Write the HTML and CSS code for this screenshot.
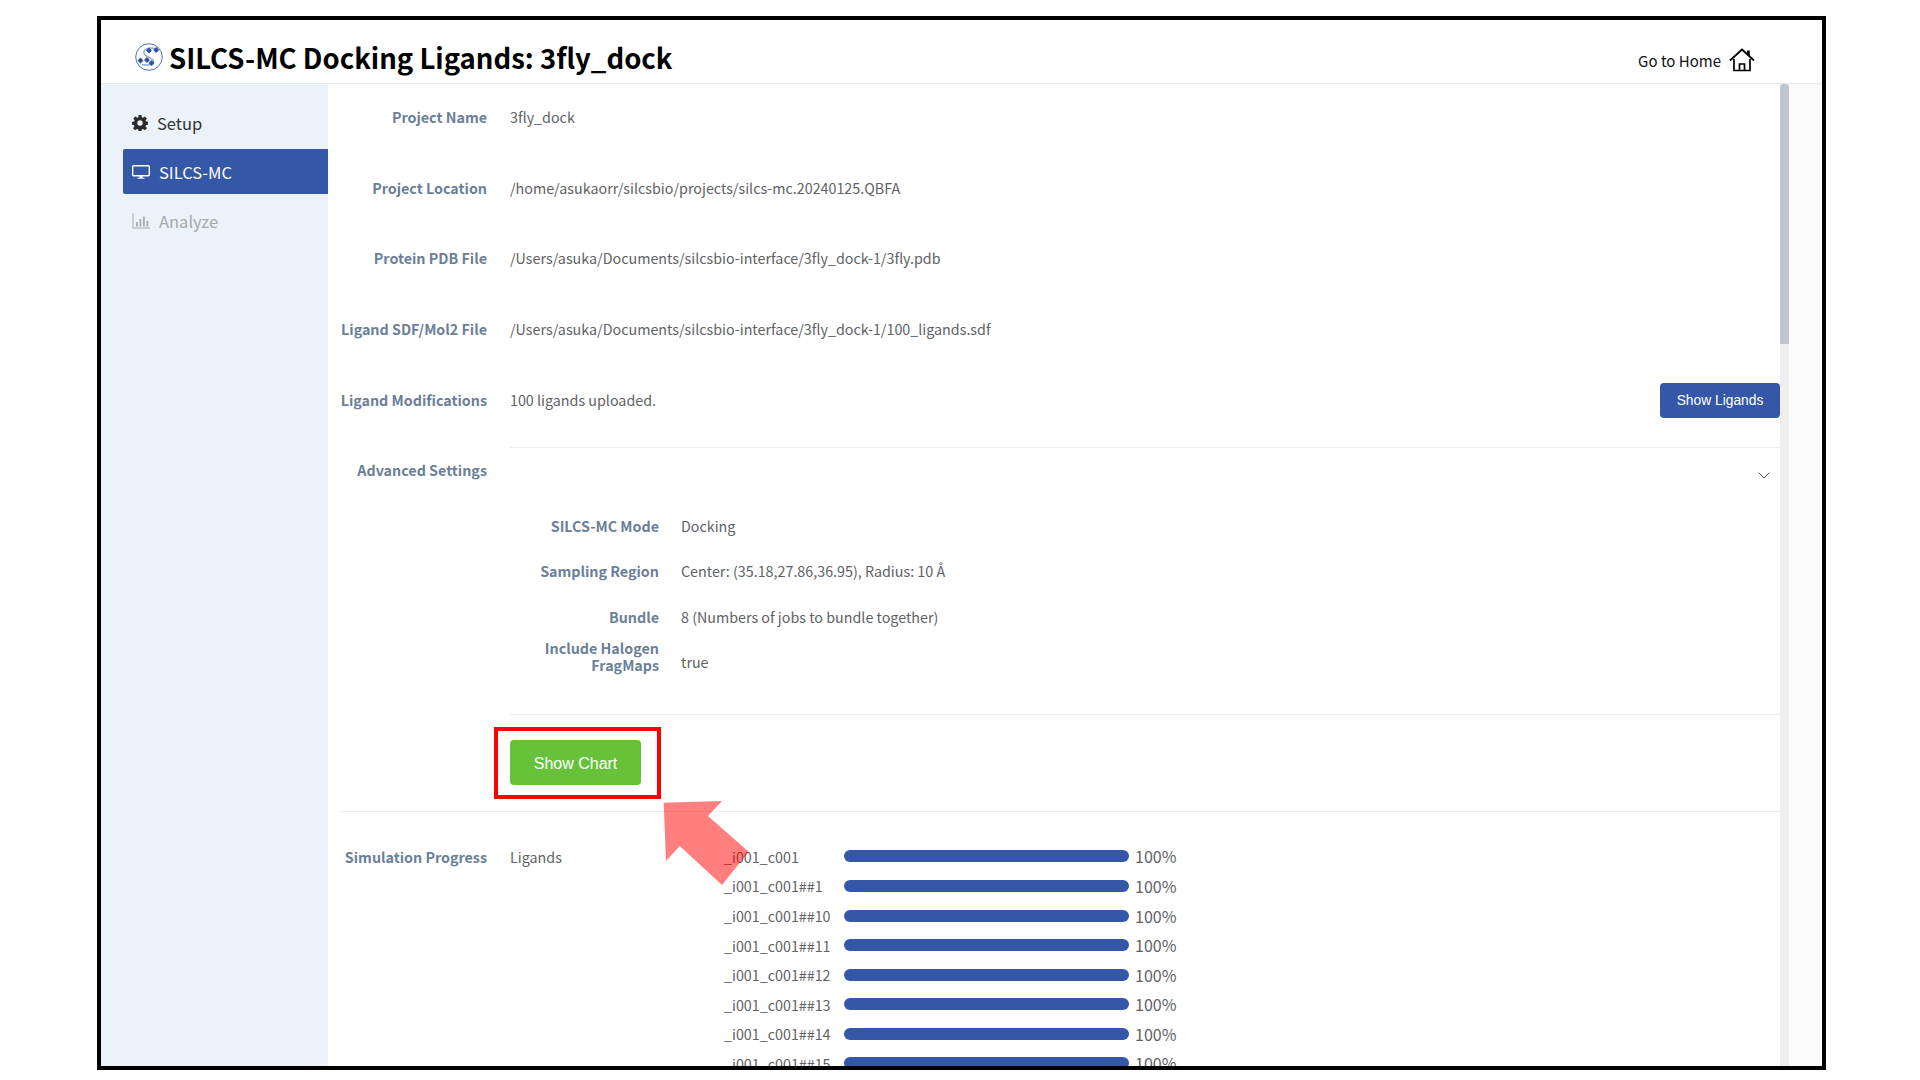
FILE: index.html
```html
<!DOCTYPE html>
<html lang="en">
<head>
<meta charset="utf-8">
<title>SILCS-MC Docking Ligands</title>
<link rel="stylesheet" href="styles.css">
</head>
<body>
<div class="frame">
  <header class="topbar">
    <svg class="logo" viewBox="0 0 28 28" aria-hidden="true">
      <circle cx="14" cy="14" r="13.300" fill="none" stroke="#4f72b8" stroke-width="1"/>
      <path d="M21 6C14 3.500 8 6 9 10.500c.8 3.300 9 4 9.500 7.500.4 3.300-5 5-11.500 3.500" fill="none" stroke="#8ea6d6" stroke-width="1.400"/>
      <path d="M14 4.500l3 3-3 3-3-3zM21.200 4l3 3-3 3-3-3zM5.500 14.500l3 3-3 3-3-3zM12 14l3 3-3 3-3-3zM16.500 17l3 3-3 3-3-3z" fill="#2f5299"/>
    </svg>
    <h1 class="title">SILCS-MC Docking Ligands: 3fly_dock</h1>
    <a class="home">Go to Home
      <svg class="home-icon" viewBox="0 0 26 24" aria-hidden="true">
        <path d="M1 12.500L13 1.500l12 11" fill="none" stroke="#000" stroke-width="1.700"/>
        <path d="M18 2.500h2.800v6.500L18 6.500z" fill="#000"/>
        <path d="M5 11v11.500h16V11" fill="none" stroke="#000" stroke-width="1.700"/>
        <path d="M10.500 23v-7h5v7" fill="none" stroke="#000" stroke-width="1.700"/>
      </svg>
    </a>
  </header>
  <div class="layout">
    <nav class="sidebar">
      <div class="nav-item">
        <svg class="nav-icon" viewBox="0 0 16 16" aria-hidden="true">
          <path fill="#2b2b2b" fill-rule="evenodd" d="M6.600 0h2.800l.4 2.200 1.200.5L12.900 1.400l2 2-1.300 1.900.5 1.200 2.200.4v2.800l-2.200.4-.5 1.200 1.300 1.900-2 2-1.900-1.300-1.200.5-.4 2.200H6.600l-.4-2.200-1.200-.5-1.900 1.300-2-2 1.300-1.900-.5-1.200L-.1 9.700V6.900l2.200-.4.5-1.200L1.300 3.400l2-2 1.900 1.300 1.200-.5zM8 5.300a2.700 2.700 0 1 0 0 5.400 2.700 2.700 0 0 0 0-5.400z"/>
        </svg>
        <span>Setup</span>
      </div>
      <div class="nav-item active">
        <svg class="nav-icon wide" viewBox="0 0 18 16" aria-hidden="true">
          <rect x=".7" y="1.700" width="16.600" height="10" rx="1" fill="none" stroke="#fff" stroke-width="1.400"/>
          <path fill="#fff" d="M7.500 12h3v1.800h2v1H5.500v-1h2z"/>
        </svg>
        <span>SILCS-MC</span>
      </div>
      <div class="nav-item muted">
        <svg class="nav-icon wide" viewBox="0 0 18 16" aria-hidden="true">
          <path fill="#aaa" d="M.5 0h1v14.500H18v1H.500zM4 9h1.800v4.500H4zM7.500 6h1.800v7.500H7.500zM11 3.500h1.800v10H11zM14.500 8h1.800v5.500h-1.800z"/>
        </svg>
        <span>Analyze</span>
      </div>
    </nav>
    <main class="main">
      <div class="content">
        <div class="row"><div class="label">Project Name</div><div class="value">3fly_dock</div></div>
        <div class="row"><div class="label">Project Location</div><div class="value">/home/asukaorr/silcsbio/projects/silcs-mc.20240125.QBFA</div></div>
        <div class="row"><div class="label">Protein PDB File</div><div class="value">/Users/asuka/Documents/silcsbio-interface/3fly_dock-1/3fly.pdb</div></div>
        <div class="row"><div class="label">Ligand SDF/Mol2 File</div><div class="value">/Users/asuka/Documents/silcsbio-interface/3fly_dock-1/100_ligands.sdf</div></div>
        <div class="row row-short">
          <div class="label">Ligand Modifications</div>
          <div class="value value-split">100 ligands uploaded.<button class="btn-blue">Show Ligands</button></div>
        </div>
        <div class="row row-adv">
          <div class="label label-adv">Advanced Settings</div>
          <div class="adv">
            <div class="chevron-line">
              <svg class="chevron" viewBox="0 0 12 7" aria-hidden="true"><path d="M.7.700L6 6l5.300-5.300" fill="none" stroke="#444" stroke-width="1"/></svg>
            </div>
            <div class="sub-row"><div class="sub-label">SILCS-MC Mode</div><div class="value">Docking</div></div>
            <div class="sub-row"><div class="sub-label">Sampling Region</div><div class="value">Center: (35.18,27.86,36.95), Radius: 10 Å</div></div>
            <div class="sub-row"><div class="sub-label">Bundle</div><div class="value">8 (Numbers of jobs to bundle together)</div></div>
            <div class="sub-row"><div class="sub-label tight">Include Halogen FragMaps</div><div class="value">true</div></div>
          </div>
        </div>
        <div class="chart-row">
          <div class="chart-btn-wrap">
            <button class="btn-green">Show Chart</button>
            <div class="highlight"></div>
          </div>
        </div>
        <div class="progress-row">
          <div class="label">Simulation Progress</div>
          <div class="value ligands">Ligands</div>
          <div class="bars">
            <div class="bar-row"><span class="bar-name">_i001_c001</span><span class="bar"></span><span class="pct">100%</span></div>
            <div class="bar-row"><span class="bar-name">_i001_c001##1</span><span class="bar"></span><span class="pct">100%</span></div>
            <div class="bar-row"><span class="bar-name">_i001_c001##10</span><span class="bar"></span><span class="pct">100%</span></div>
            <div class="bar-row"><span class="bar-name">_i001_c001##11</span><span class="bar"></span><span class="pct">100%</span></div>
            <div class="bar-row"><span class="bar-name">_i001_c001##12</span><span class="bar"></span><span class="pct">100%</span></div>
            <div class="bar-row"><span class="bar-name">_i001_c001##13</span><span class="bar"></span><span class="pct">100%</span></div>
            <div class="bar-row"><span class="bar-name">_i001_c001##14</span><span class="bar"></span><span class="pct">100%</span></div>
            <div class="bar-row"><span class="bar-name">_i001_c001##15</span><span class="bar"></span><span class="pct">100%</span></div>
          </div>
        </div>
      </div>
      <div class="track"><div class="thumb"></div></div>
      <div class="gutter"></div>
    </main>
  </div>
  <svg class="arrow" viewBox="0 0 92 88" aria-hidden="true">
    <polygon points="3.700,4.700 62,3 48,18 88.600,53.700 62,87 19.700,48 6,63" fill="rgba(255,0,0,.5)"/>
  </svg>
</div>
</body>
</html>
```
FILE: styles.css
```css
* { box-sizing: border-box; }
html, body { margin: 0; padding: 0; background: #fff; overflow: hidden; }
body {
  font-family: "Noto Sans CJK JP", "Noto Sans", sans-serif;
  width: 1920px;
  height: 1080px;
}
.frame {
  position: relative;
  margin: 16px 0 0 97px;
  width: 1729px;
  height: 1054px;
  border: 4px solid #000;
  overflow: hidden;
  display: flex;
  flex-direction: column;
  background: #fff;
}
.topbar {
  flex: 0 0 64px;
  display: flex;
  align-items: center;
  padding: 10px 67px 0 34px;
  border-bottom: 1px solid #e4e7ed;
}
.logo { width: 28px; height: 28px; margin-right: 6px; flex: none; }
.title {
  margin: 0;
  font-size: 27.5px;
  line-height: 40px;
  font-weight: 700;
  color: #000;
  flex: 1;
}
.home {
  display: flex;
  align-items: center;
  gap: 8px;
  font-size: 15px;
  color: #111;
  margin-top: 8px;
}
.home-icon { width: 26px; height: 24px; margin-top: -2px; }
.layout { flex: 1; display: flex; min-height: 0; }
.sidebar {
  flex: 0 0 227px;
  background: #ebf2f9;
  padding: 16px 0 0 22px;
  display: flex;
  flex-direction: column;
  gap: 4px;
}
.nav-item {
  height: 45px;
  display: flex;
  align-items: center;
  padding-left: 9px;
  font-size: 16.5px;
  color: #333;
  border-radius: 2px 0 0 2px;
}
.nav-item.active { background: #3557a7; color: #fff; }
.nav-item.muted { color: #a8a8a8; }
.nav-icon { width: 16px; height: 16px; margin-right: 9px; flex: none; }
.nav-icon.wide { width: 18px; margin-right: 9px; }
.main { flex: 1; display: flex; min-width: 0; }
.content {
  flex: 0 0 1452px;
  padding: 0 0 0 11px;
  overflow: hidden;
}
.track { flex: 0 0 9px; background: #efefef; }
.thumb { height: 260px; background: #bcc5d2; border-radius: 4px 4px 0 0; }
.gutter { flex: 1; background: #fafafa; }
.row {
  display: grid;
  grid-template-columns: 148px 1fr;
  column-gap: 23px;
  height: 70.7px;
  padding-top: 21px;
  line-height: 24px;
}
.label {
  justify-self: end;
  text-align: right;
  font-weight: 700;
  color: #6b7f99;
  font-size: 14.3px;
  line-height: 24px;
  white-space: nowrap;
}
.value { color: #606266; font-size: 14.3px; line-height: 24px; white-space: nowrap; }
.value-split { display: flex; justify-content: space-between; align-items: center; height: 24px; }
.btn-blue {
  width: 120px;
  height: 35px;
  margin-top: 2px;
  flex: none;
  border: 0;
  border-radius: 4px;
  background: #3557a7;
  color: #fff;
  font-family: "Liberation Sans", Arial, sans-serif;
  font-size: 13.8px;
}
.row-adv { height: auto; padding-top: 0; }
.label-adv { padding-top: 21px; }
.adv { border-top: 1px solid #ebeef5; margin-top: 10px; padding-bottom: 29px; border-bottom: 1px solid #ebeef5; }
.chevron-line { height: 55px; display: flex; justify-content: flex-end; padding: 24px 10px 0 0; }
.chevron { width: 12px; height: 7px; }
.sub-row {
  display: grid;
  grid-template-columns: 149px 1fr;
  column-gap: 22px;
  height: 45.3px;
  align-items: center;
}
.sub-label {
  text-align: right;
  font-weight: 700;
  color: #6b7f99;
  font-size: 14.3px;
  line-height: 24px;
}
.sub-label.tight { line-height: 17px; margin-bottom: 12px; }
.chart-row {
  padding: 25px 0 26px 171px;
  border-bottom: 1px solid #ebeef5;
}
.chart-btn-wrap { position: relative; width: 131px; height: 45px; }
.btn-green {
  display: block;
  width: 131px;
  height: 45px;
  padding-top: 4px;
  border: 0;
  border-radius: 4px;
  background: #67c23a;
  color: #fff;
  font-family: "Liberation Sans", Arial, sans-serif;
  font-size: 16px;
}
.highlight {
  position: absolute;
  left: -16px;
  top: -13px;
  width: 167px;
  height: 72px;
  border: 4px solid #f00;
}
.progress-row {
  display: grid;
  grid-template-columns: 148px 237px 1fr;
  padding-top: 33px;
}
.progress-row .ligands { margin-left: 23px; }
.bars { display: flex; flex-direction: column; }
.bar-row { display: flex; align-items: center; height: 29.57px; margin-top: -3px; margin-bottom: 3px; }
.bar-name { width: 120px; color: #606266; font-size: 14.3px; white-space: nowrap; }
.bar { width: 285px; height: 12px; border-radius: 6px; background: #3557a7; }
.pct { margin-left: 6px; color: #606266; font-size: 16px; }
.arrow {
  position: absolute;
  left: 559px;
  top: 778px;
  width: 92px;
  height: 88px;
}
```
